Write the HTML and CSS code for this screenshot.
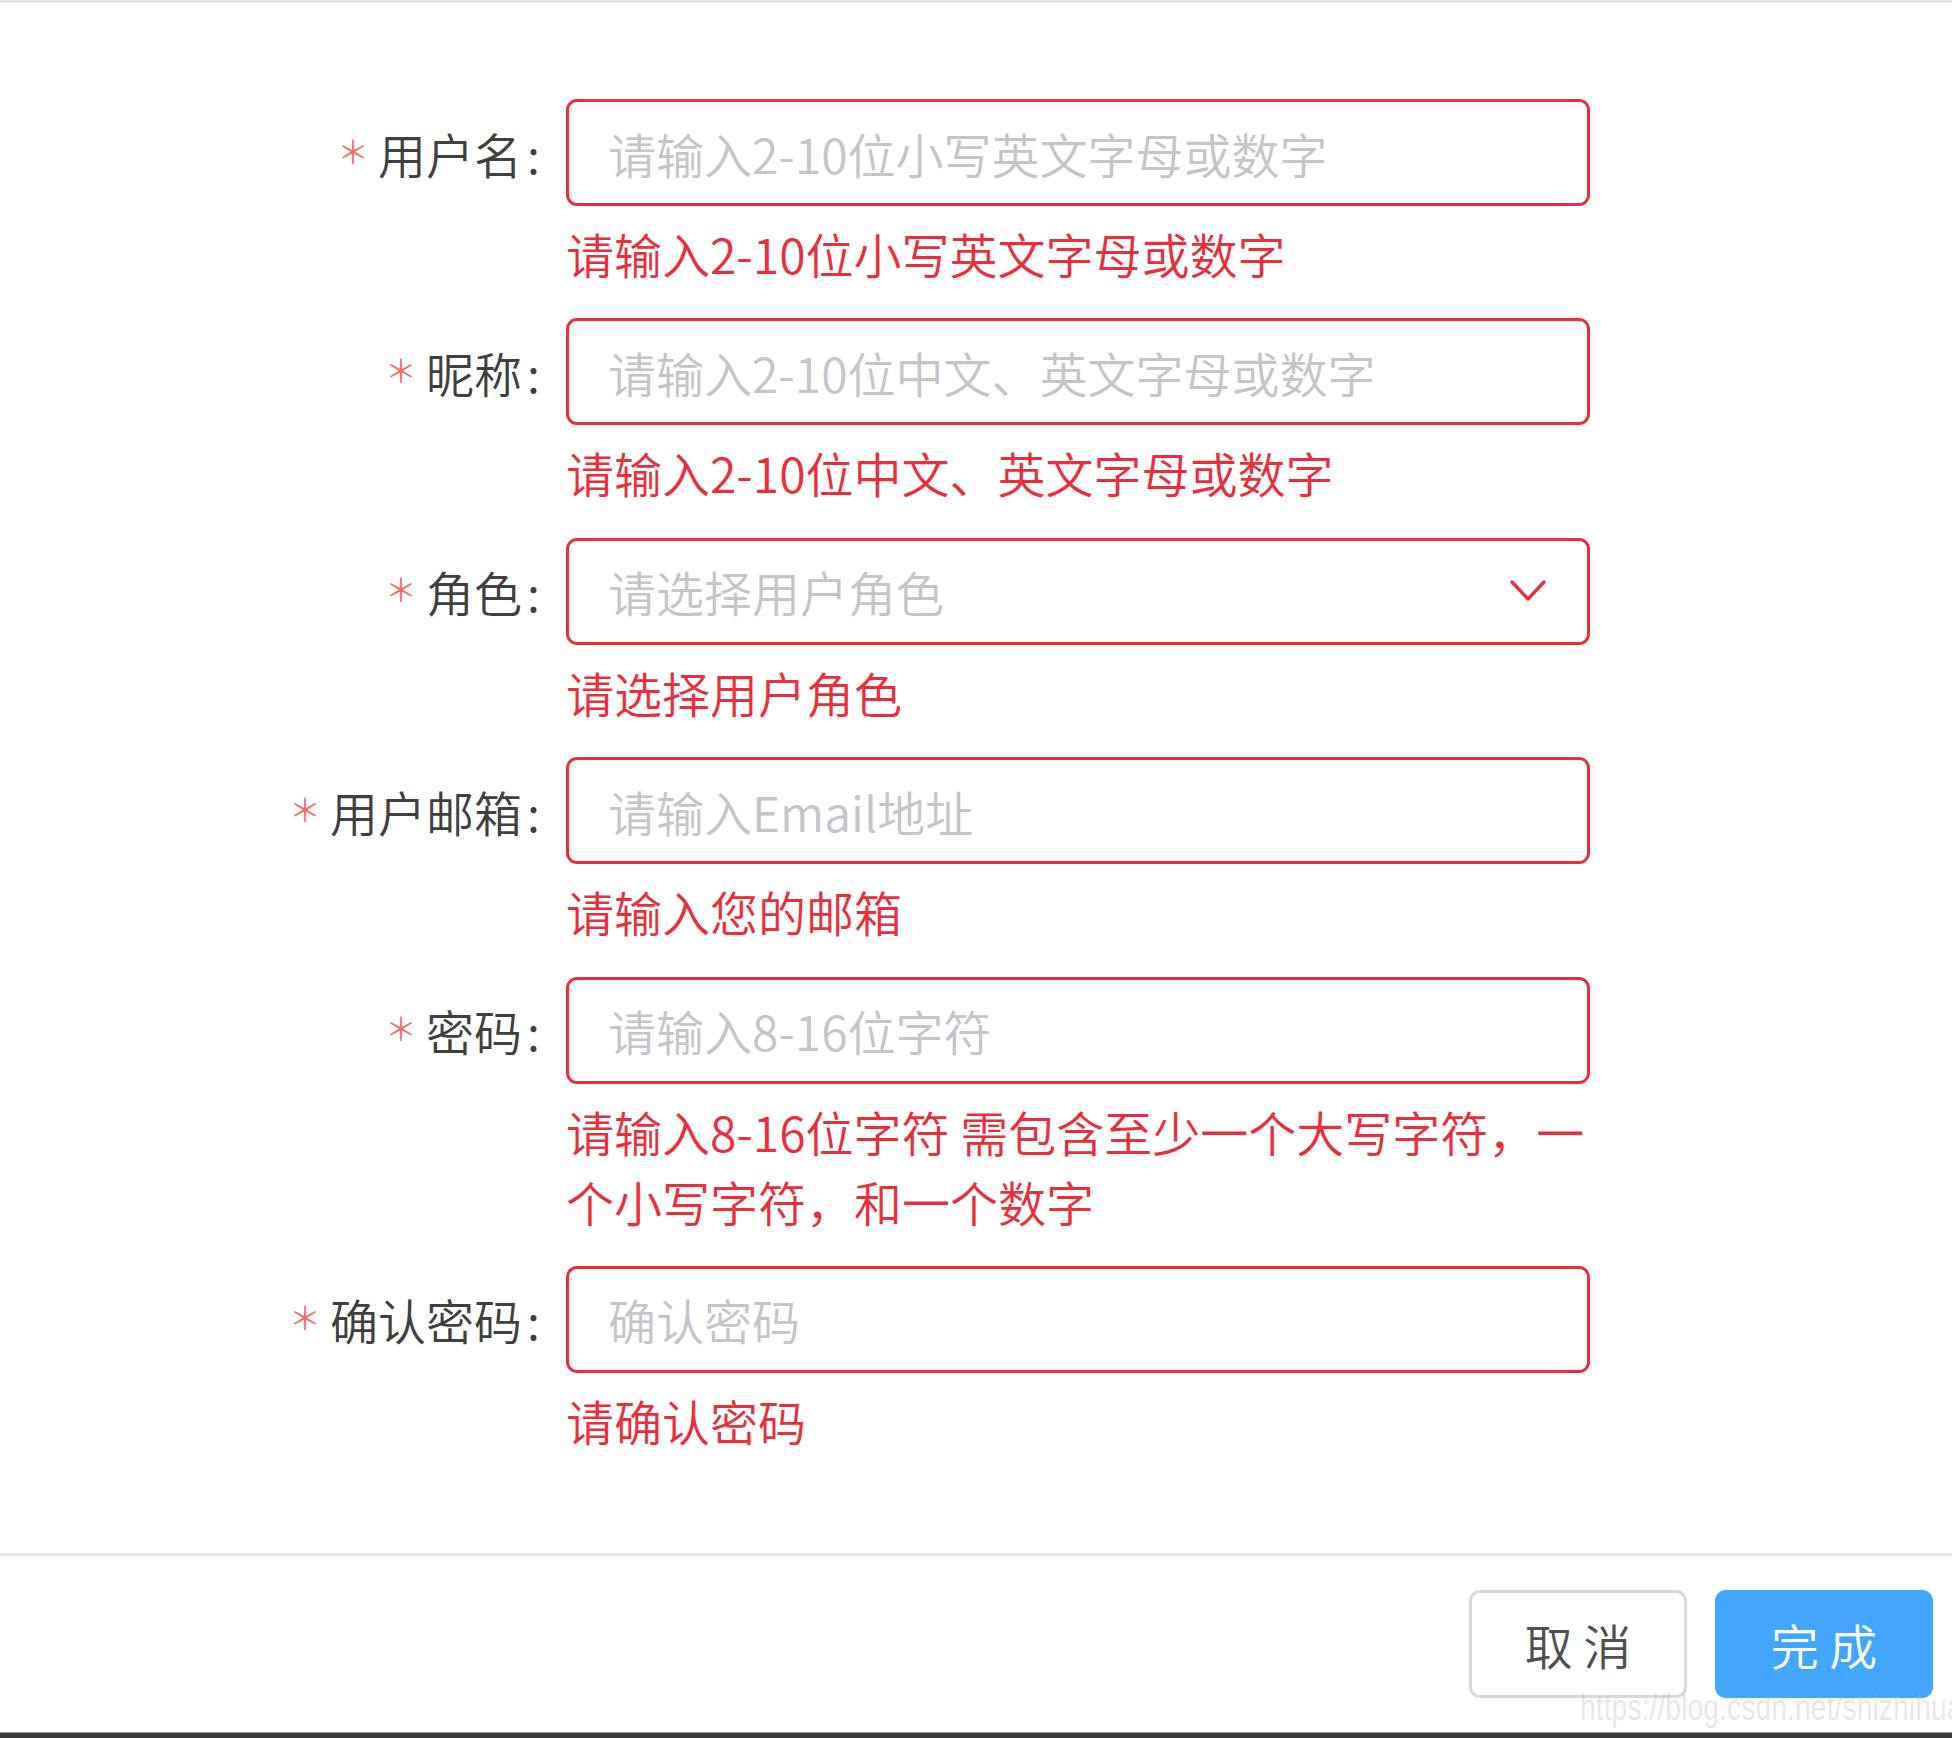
FILE: index.html
```html
<!DOCTYPE html>
<html lang="zh-CN">
<head>
<meta charset="utf-8">
<title>新增用户</title>
<link rel="stylesheet" href="styles.css">
</head>
<body>
<div class="page">
  <form class="form">
    <div class="item">
      <label class="label"><span class="req">＊</span>用户名<span class="colon">:</span></label>
      <div class="control"><span class="ph">请输入2-10位小写英文字母或数字</span></div>
      <div class="error">请输入2-10位小写英文字母或数字</div>
    </div>
    <div class="item">
      <label class="label"><span class="req">＊</span>昵称<span class="colon">:</span></label>
      <div class="control"><span class="ph">请输入2-10位中文、英文字母或数字</span></div>
      <div class="error">请输入2-10位中文、英文字母或数字</div>
    </div>
    <div class="item">
      <label class="label"><span class="req">＊</span>角色<span class="colon">:</span></label>
      <div class="control select"><span class="ph">请选择用户角色</span>
        <svg class="arrow" width="38" height="26" viewBox="0 0 38 26"><polyline points="3,4 19,21 35,4" fill="none" stroke="#ea2f3c" stroke-width="3.4" stroke-linecap="round" stroke-linejoin="round"/></svg>
      </div>
      <div class="error">请选择用户角色</div>
    </div>
    <div class="item">
      <label class="label"><span class="req">＊</span>用户邮箱<span class="colon">:</span></label>
      <div class="control"><span class="ph">请输入Email地址</span></div>
      <div class="error">请输入您的邮箱</div>
    </div>
    <div class="item">
      <label class="label"><span class="req">＊</span>密码<span class="colon">:</span></label>
      <div class="control"><span class="ph">请输入8-16位字符</span></div>
      <div class="error">请输入8-16位字符 需包含至少一个大写字符，一个小写字符，和一个数字</div>
    </div>
    <div class="item">
      <label class="label"><span class="req">＊</span>确认密码<span class="colon">:</span></label>
      <div class="control"><span class="ph">确认密码</span></div>
      <div class="error">请确认密码</div>
    </div>
  </form>
  <div class="footer">
    <button class="btn btn-default" type="button">取 消</button>
    <button class="btn btn-primary" type="button">完 成</button>
    <div class="watermark">https://blog.csdn.net/shizhihua</div>
  </div>
  <div class="bottombar"></div>
</div>
</body>
</html>
```

FILE: styles.css
```css
html, body {
  margin: 0;
  padding: 0;
  background: #ffffff;
}

body {
  font-family: "Noto Sans CJK SC", "Noto Sans", sans-serif;
  font-weight: 350;
}

.page {
  height: 1738px;
  box-sizing: border-box;
  border-top: 3px solid #e6e6e6;
  display: flex;
  flex-direction: column;
}

.form {
  flex: 1;
  margin: 0;
  padding-top: 96px;
}

.item {
  display: grid;
  grid-template-columns: 566px 1024px;
  margin-bottom: 30.4px;
}

.label {
  align-self: center;
  text-align: right;
  padding-right: 26px;
  font-size: 48px;
  line-height: 106px;
  color: #3f3f3f;
  white-space: nowrap;
}

.colon {
  margin-left: 5px;
}

.req {
  color: #f56c6c;
  font-size: 32px;
  line-height: 0;
  font-weight: 350;
  margin-right: 9px;
  position: relative;
  top: -10px;
}

.control {
  height: 107px;
  box-sizing: border-box;
  border: 3px solid #ea2f3c;
  border-radius: 11px;
  padding: 0 40px 0 39px;
  display: flex;
  align-items: center;
  font-size: 48px;
  color: #c3c5ca;
}

.select {
  justify-content: space-between;
  padding-right: 40px;
}

.arrow {
  display: block;
}

.error {
  grid-column: 2;
  margin-top: 12px;
  font-size: 48px;
  line-height: 70px;
  color: #ea2f3c;
}

.footer {
  position: relative;
  height: 179px;
  box-sizing: border-box;
  border-top: 3px solid #e9e9e9;
  padding: 34px 19px 0 0;
  display: flex;
  justify-content: flex-end;
  align-items: flex-start;
  gap: 28px;
}

.btn {
  width: 218px;
  height: 108px;
  box-sizing: border-box;
  border-radius: 11px;
  font-family: "Noto Sans CJK SC", sans-serif;
  font-weight: 350;
  font-size: 48px;
  padding: 0;
  cursor: pointer;
}

.btn-default {
  background: #ffffff;
  border: 3px solid #d9d9d9;
  color: #4f4f4f;
}

.btn-primary {
  background: #42a5ff;
  border: 3px solid #42a5ff;
  color: #ffffff;
}

.watermark {
  position: absolute;
  left: 1580px;
  top: 132px;
  font-family: "Liberation Sans", sans-serif;
  font-size: 36px;
  line-height: 40px;
  color: rgba(170, 170, 170, 0.28);
  white-space: nowrap;
  transform: scaleX(0.79);
  transform-origin: left top;
  pointer-events: none;
}

.bottombar {
  height: 5px;
  background: #3b3b3b;
  border-top: 1px solid #9a9a9a;
}
```
